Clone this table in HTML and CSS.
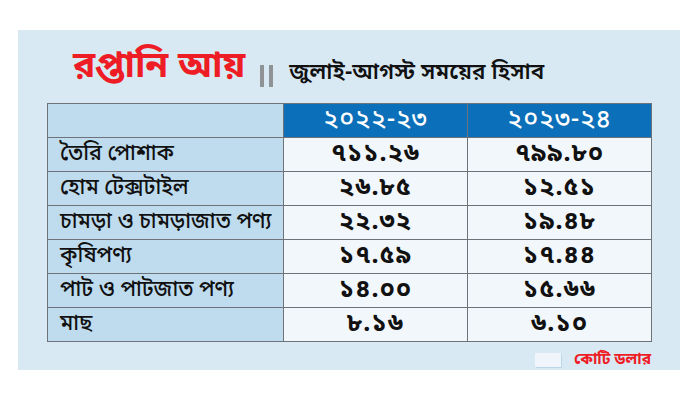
FILE: index.html
```html
<!DOCTYPE html>
<html lang="bn">
<head>
<meta charset="utf-8">
<link rel="stylesheet" href="styles.css">
</head>
<body>
<div class="panel">
  <div class="heading">
    <span class="title">রপ্তানি আয়</span>
    <span class="bars"><i></i><i></i></span>
    <span class="subtitle">জুলাই-আগস্ট সময়ের হিসাব</span>
  </div>
  <table class="data">
    <colgroup><col class="c1"><col class="c2"><col class="c3"></colgroup>
    <thead>
      <tr><th class="blank"></th><th>২০২২-২৩</th><th>২০২৩-২৪</th></tr>
    </thead>
    <tbody>
      <tr><td>তৈরি পোশাক</td><td>৭১১.২৬</td><td>৭৯৯.৮০</td></tr>
      <tr><td>হোম টেক্সটাইল</td><td>২৬.৮৫</td><td>১২.৫১</td></tr>
      <tr><td>চামড়া ও চামড়াজাত পণ্য</td><td>২২.৩২</td><td>১৯.৪৮</td></tr>
      <tr><td>কৃষিপণ্য</td><td>১৭.৫৯</td><td>১৭.৪৪</td></tr>
      <tr><td>পাট ও পাটজাত পণ্য</td><td>১৪.০০</td><td>১৫.৬৬</td></tr>
      <tr><td>মাছ</td><td>৮.১৬</td><td>৬.১০</td></tr>
    </tbody>
  </table>
  <div class="legend">
    <span class="swatch"></span>
    <span class="unit">কোটি ডলার</span>
  </div>
</div>
</body>
</html>
```

FILE: styles.css
```css
html, body {
  margin: 0;
  padding: 0;
  background: #ffffff;
}
body {
  font-family: "Noto Sans Bengali", "Noto Serif Bengali", "Lohit Bengali", "FreeSans", "Noto Sans", sans-serif;
  width: 700px;
  height: 400px;
  padding-top: 30px;
  box-sizing: border-box;
}
.panel {
  margin-left: 18px;
  width: 662px;
  height: 340px;
  background: #d8e9f4;
  box-sizing: border-box;
  padding: 14px 29px 0 29px;
}
.heading {
  display: flex;
  align-items: flex-end;
  height: 58px;
  padding-left: 26px;
}
.title {
  color: #ee1c25;
  font-size: 37px;
  font-weight: 700;
  line-height: 44px;
  margin-bottom: 12px;
}
.bars {
  display: flex;
  gap: 5px;
  margin: 0 16px 15px 15px;
  height: 22px;
}
.bars i {
  display: block;
  width: 4px;
  background: #8f9396;
}
.subtitle {
  color: #111;
  font-size: 22.5px;
  font-weight: 600;
  line-height: 28px;
  margin-bottom: 15px;
  letter-spacing: 0.1px;
}
.data {
  border-collapse: collapse;
  width: 604px;
  table-layout: fixed;
  margin-top: 1px;
}
.c1 { width: 236px; }
.c2 { width: 184px; }
.c3 { width: 184px; }
.data th, .data td {
  border: 1.5px solid #6d7378;
  height: 33px;
  padding: 0;
  font-size: 22px;
  line-height: 26px;
  color: #111;
}
.data th {
  background: #0b70b9;
  color: #fff;
  font-weight: 500;
  text-align: center;
  font-size: 25px;
  letter-spacing: 1px;
}
.data th.blank {
  background: #bfdcef;
}
.data td {
  background: #f2f7fb;
  text-align: center;
  font-weight: 700;
  font-size: 25px;
  letter-spacing: 1px;
}
.data td:first-child {
  background: #bfdcef;
  text-align: left;
  padding-left: 12px;
  font-weight: 500;
  font-size: 21.5px;
  letter-spacing: 0;
}
.legend {
  display: flex;
  justify-content: flex-end;
  align-items: center;
  gap: 13px;
  margin-top: 8px;
  padding-right: 0;
}
.swatch {
  display: block;
  width: 26px;
  height: 14px;
  background: #eff5fb;
  box-shadow: 1px 1px 0 #bcd6ea;
}
.unit {
  color: #ee1c25;
  font-size: 15.5px;
  font-weight: 700;
  line-height: 20px;
}
```
